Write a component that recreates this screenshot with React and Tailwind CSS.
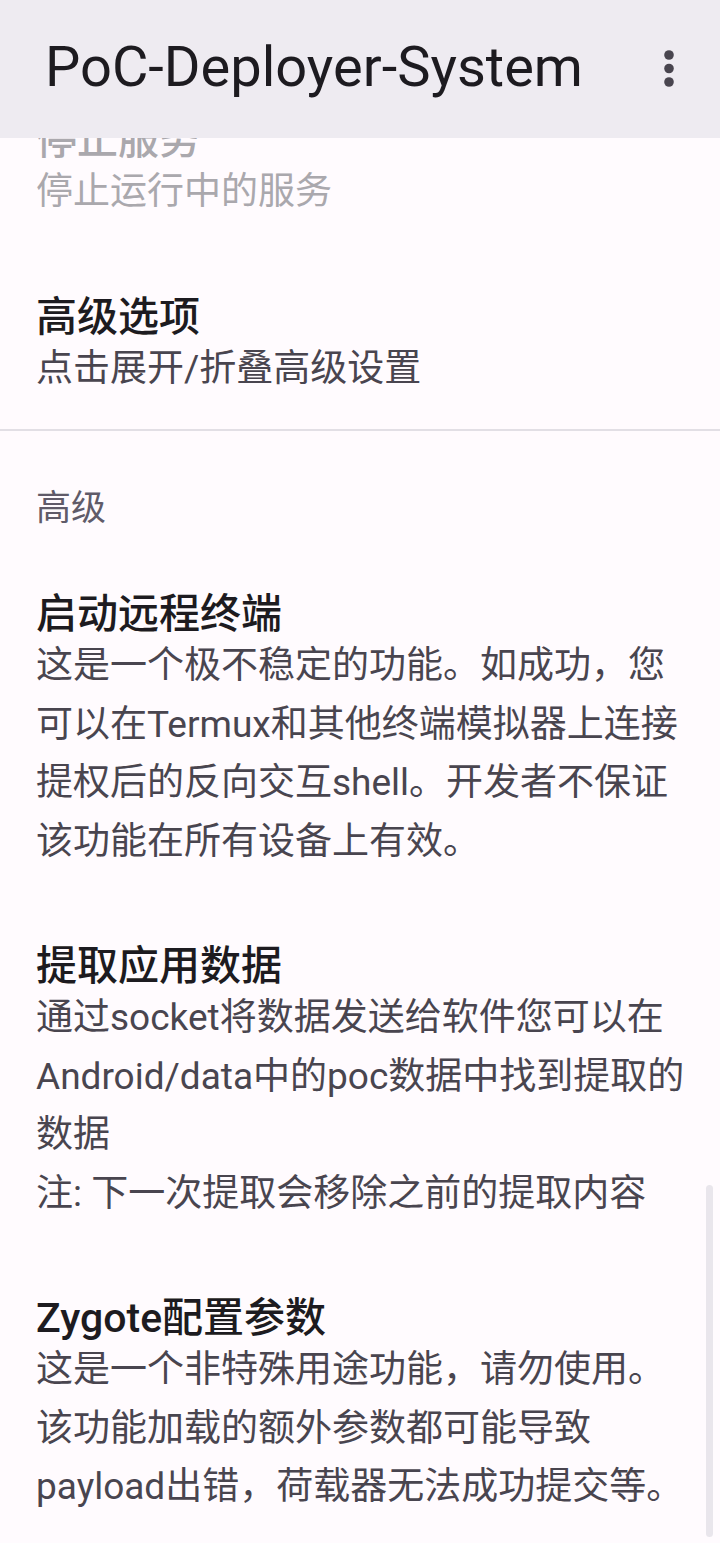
import React from 'react';

const font = "font-['Roboto','Noto_Sans_CJK_SC',sans-serif]";

const Pref = ({ title, lines, disabled, className = 'py-[36px]' }) => (
    <div className={`px-[36px] ${className}`}>
        <div className={`text-[41px] leading-[46px] font-medium whitespace-nowrap ${disabled ? 'text-[#aaa8ad]' : 'text-[#1d1b20]'}`}>
            {title}
        </div>
        {lines.map((line, i) => (
            <div
                key={i}
                className={`text-[37px] leading-[58.5px] whitespace-nowrap ${disabled ? 'text-[#aaa8ad]' : 'text-[#49454f]'}`}
            >
                {line}
            </div>
        ))}
    </div>
);

const App = () => {
    return (
        <div className={`relative w-[720px] h-[1543px] bg-[#fffbfe] flex flex-col overflow-hidden ${font}`}>
            {/* Top app bar */}
            <div className="h-[138px] shrink-0 bg-[#eeebf1] flex items-center justify-between pl-[45px] pr-[45px] z-10">
                <span className="text-[56px] leading-none text-[#1d1b20] font-['Roboto',sans-serif] -mt-[4px]">
                    PoC-Deployer-System
                </span>
                <svg width="12" height="40" viewBox="0 0 12 40" className="text-[#49454f]">
                    <circle cx="6" cy="6" r="4.8" fill="currentColor" />
                    <circle cx="6" cy="19.5" r="4.8" fill="currentColor" />
                    <circle cx="6" cy="33" r="4.8" fill="currentColor" />
                </svg>
            </div>

            {/* Preference list (scrolled) */}
            <div className="flex-1 overflow-hidden">
                <div className="-mt-[57px]">
                    <Pref title="停止服务" lines={['停止运行中的服务']} disabled />
                    <Pref title="高级选项" lines={['点击展开/折叠高级设置']} className="pt-[36px] pb-[31px]" />
                    <div className="h-[2px] bg-[#e2dfe5]" />

                    {/* Category */}
                    <div className="px-[36px] pt-[53px] pb-[21px] text-[35px] leading-[50px] text-[#605b69]">
                        高级
                    </div>

                    <Pref
                        title="启动远程终端"
                        lines={[
                            '这是一个极不稳定的功能。如成功，您',
                            '可以在Termux和其他终端模拟器上连接',
                            '提权后的反向交互shell。开发者不保证',
                            '该功能在所有设备上有效。',
                        ]}
                    />
                    <Pref
                        title="提取应用数据"
                        lines={[
                            '通过socket将数据发送给软件您可以在',
                            'Android/data中的poc数据中找到提取的',
                            '数据',
                            '注: 下一次提取会移除之前的提取内容',
                        ]}
                    />
                    <Pref
                        title="Zygote配置参数"
                        lines={[
                            '这是一个非特殊用途功能，请勿使用。',
                            '该功能加载的额外参数都可能导致',
                            'payload出错，荷载器无法成功提交等。',
                        ]}
                    />
                </div>
            </div>

            {/* Scrollbar thumb */}
            <div className="absolute right-[7px] top-[1185px] w-[7px] h-[352px] rounded-full bg-[#e9e6ec]" />
        </div>
    );
};

export default App;
